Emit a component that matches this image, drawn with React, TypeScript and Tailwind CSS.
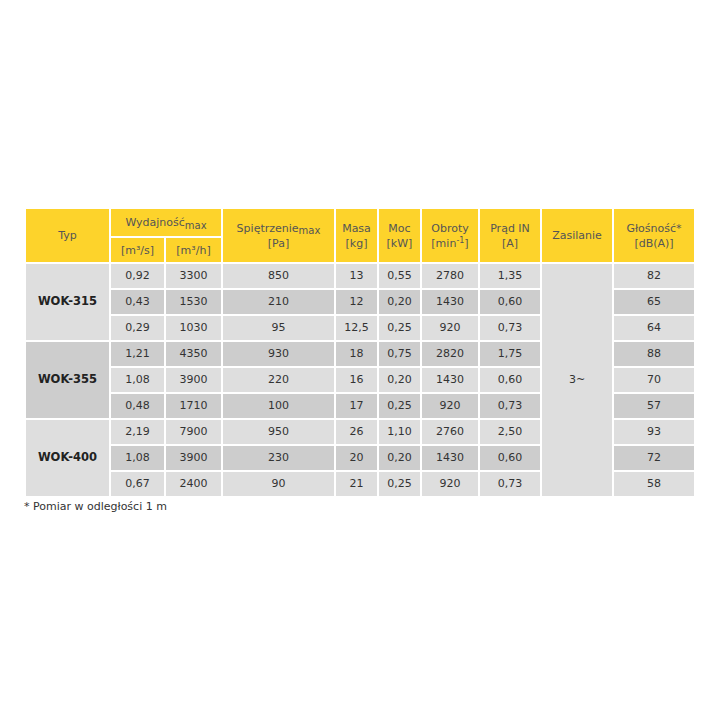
const groups = [
  {
    name: "WOK-315",
    rows: [
      ["0,92", "3300", "850", "13", "0,55", "2780", "1,35", "82"],
      ["0,43", "1530", "210", "12", "0,20", "1430", "0,60", "65"],
      ["0,29", "1030", "95", "12,5", "0,25", "920", "0,73", "64"],
    ],
  },
  {
    name: "WOK-355",
    rows: [
      ["1,21", "4350", "930", "18", "0,75", "2820", "1,75", "88"],
      ["1,08", "3900", "220", "16", "0,20", "1430", "0,60", "70"],
      ["0,48", "1710", "100", "17", "0,25", "920", "0,73", "57"],
    ],
  },
  {
    name: "WOK-400",
    rows: [
      ["2,19", "7900", "950", "26", "1,10", "2760", "2,50", "93"],
      ["1,08", "3900", "230", "20", "0,20", "1430", "0,60", "72"],
      ["0,67", "2400", "90", "21", "0,25", "920", "0,73", "58"],
    ],
  },
];

const widths = [85, 55, 57, 113, 43, 43, 58, 62, 72, 82];

export default function App() {
  const th = "border-2 border-white bg-[#fdd32b] font-normal text-[#555] leading-[15px] align-middle";
  const td = "border-2 border-white text-center align-middle";
  return (
    <div className="min-h-[720px] w-[720px] bg-white pt-[207px] pl-[24px] text-[11px] text-[#333] font-['DejaVu_Sans',sans-serif]">
      <table className="table-fixed border-collapse w-[672px]">
        <colgroup>
          {widths.map((w, i) => (
            <col key={i} style={{ width: w }} />
          ))}
        </colgroup>
        <thead>
          <tr className="h-[29px]">
            <th rowSpan={2} className={th}>Typ</th>
            <th colSpan={2} className={th}>
              Wydajność<sub className="text-[10px]">max</sub>
            </th>
            <th rowSpan={2} className={th}>
              Spiętrzenie<sub className="text-[10px]">max</sub>
              <br />[Pa]
            </th>
            <th rowSpan={2} className={th}>Masa<br />[kg]</th>
            <th rowSpan={2} className={th}>Moc<br />[kW]</th>
            <th rowSpan={2} className={th}>
              Obroty<br />[min<sup className="text-[8px]">-1</sup>]
            </th>
            <th rowSpan={2} className={th}>Prąd IN<br />[A]</th>
            <th rowSpan={2} className={th}>Zasilanie</th>
            <th rowSpan={2} className={th}>Głośność*<br />[dB(A)]</th>
          </tr>
          <tr className="h-[26px]">
            <th className={th}>[m³/s]</th>
            <th className={th}>[m³/h]</th>
          </tr>
        </thead>
        <tbody>
          {groups.map((g, gi) =>
            g.rows.map((r, ri) => {
              const idx = gi * 3 + ri;
              const bg = idx % 2 === 1 ? "bg-[#cdcdcd]" : "bg-[#dedede]";
              return (
                <tr key={idx} className="h-[26px]">
                  {ri === 0 && (
                    <td rowSpan={3} className={`${td} font-bold text-[11.5px] text-[#222] ${gi === 1 ? "bg-[#cdcdcd]" : "bg-[#dedede]"}`}>
                      {g.name}
                    </td>
                  )}
                  {r.slice(0, 7).map((v, i) => (
                    <td key={i} className={`${td} ${bg}`}>{v}</td>
                  ))}
                  {idx === 0 && (
                    <td rowSpan={9} className={`${td} bg-[#dedede]`}>3~</td>
                  )}
                  <td className={`${td} ${bg}`}>{r[7]}</td>
                </tr>
              );
            })
          )}
        </tbody>
      </table>
      <p className="mt-[1px] text-[11px] text-[#333]">* Pomiar w odległości 1 m</p>
    </div>
  );
}
